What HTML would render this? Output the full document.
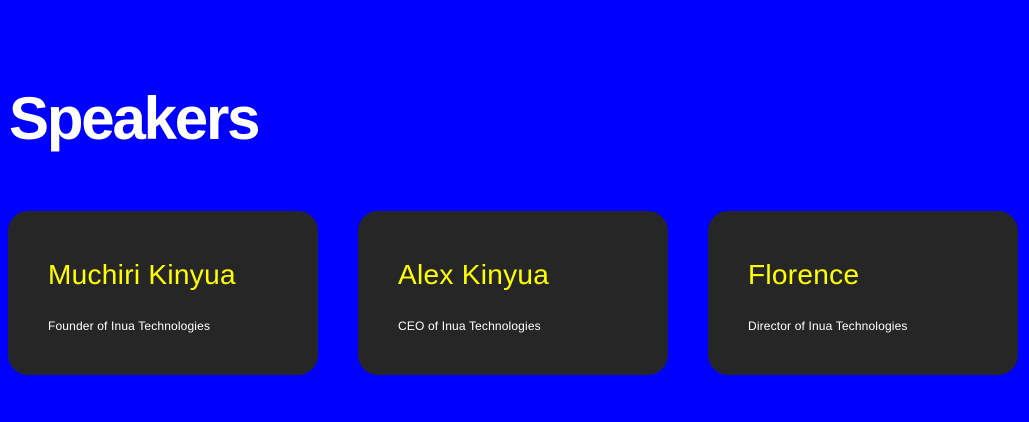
<!DOCTYPE html>
<html><head><style>
body{margin:0;width:1029px;height:422px;background:#0000ff;font-family:"Liberation Sans",sans-serif;overflow:hidden;position:relative}
h1{position:absolute;left:9px;top:81px;margin:0;font-size:60px;font-weight:bold;color:#fff;line-height:76px;letter-spacing:-2.2px}
.c{position:absolute;top:211px;width:310px;height:164px;background:#262626;border-radius:20px}
.n{position:absolute;left:40px;top:46px;font-size:28px;color:#ffff00;line-height:36px;letter-spacing:0.3px}
.s{position:absolute;left:40px;top:107px;font-size:12px;color:#fff;line-height:16px;letter-spacing:0.15px}
</style></head><body>
<h1>Speakers</h1>
<div class="c" style="left:8px"><div class="n">Muchiri Kinyua</div><div class="s">Founder of Inua Technologies</div></div>
<div class="c" style="left:358px"><div class="n">Alex Kinyua</div><div class="s">CEO of Inua Technologies</div></div>
<div class="c" style="left:708px"><div class="n">Florence</div><div class="s">Director of Inua Technologies</div></div>
</body></html>
